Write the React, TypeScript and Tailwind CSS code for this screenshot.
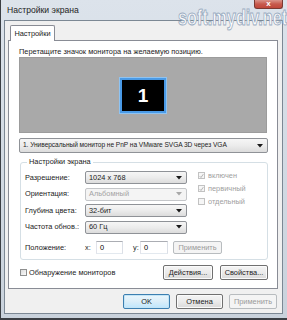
import React from "react";

const font = { fontFamily: '"Liberation Sans", Arial, sans-serif' };

function Arrow({ disabled }: { disabled?: boolean }) {
  return (
    <svg width="6" height="4" viewBox="0 0 6 4" className="shrink-0">
      <path d="M0 0 L6 0 L3 3.5 Z" fill={disabled ? "#a8a8a8" : "#1a1a1a"} />
    </svg>
  );
}

function Combo({
  text,
  disabled,
  className,
  textClass,
}: {
  text: string;
  disabled?: boolean;
  className: string;
  textClass?: string;
}) {
  return (
    <div
      className={
        "flex items-center justify-between rounded-[2px] border pl-[3px] pr-[4px] " +
        (disabled
          ? "border-[#c4c6c9] bg-[#f4f4f4] text-[#a3a3a3] "
          : "border-[#8f9297] bg-gradient-to-b from-[#f6f6f6] via-[#ececec] to-[#dcdcdc] text-[#1b1b1b] ") +
        className
      }
    >
      <span className={"whitespace-nowrap leading-none " + (textClass || "")}>{text}</span>
      <Arrow disabled={disabled} />
    </div>
  );
}

function Btn({
  text,
  disabled,
  def,
  className,
}: {
  text: string;
  disabled?: boolean;
  def?: boolean;
  className: string;
}) {
  return (
    <div
      className={
        "flex items-center justify-center rounded-[2px] border leading-none " +
        (disabled
          ? "border-[#b8bcbf] bg-[#f4f4f4] text-[#9a9a9a] "
          : def
          ? "border-[#3c7fb1] bg-gradient-to-b from-[#eaf6fd] via-[#dbeef9] to-[#bee6fd] text-[#1b1b1b] shadow-[inset_0_0_0_1px_#c4e5f6] "
          : "border-[#707070] bg-gradient-to-b from-[#f4f4f4] via-[#ebebeb] to-[#d9d9d9] text-[#1b1b1b] shadow-[inset_0_0_0_1px_#fbfbfb] ") +
        className
      }
    >
      {text}
    </div>
  );
}

function Check({
  checked,
  disabled,
  label,
}: {
  checked?: boolean;
  disabled?: boolean;
  label: string;
}) {
  return (
    <div className="flex h-[13px] items-center gap-[3px]">
      <div
        className={
          "flex h-[7px] w-[7px] items-center justify-center border " +
          (disabled ? "border-[#c2c2c2] bg-[#f6f6f6]" : "border-[#8e8f8f] bg-gradient-to-br from-[#e2e2e2] to-[#ffffff]")
        }
      >
        {checked && (
          <svg width="6" height="6" viewBox="0 0 6 6">
            <path d="M0.8 3.2 L2.4 4.8 L5.2 0.8" stroke="#a6a6a6" strokeWidth="1" fill="none" />
          </svg>
        )}
      </div>
      <span className={"leading-none " + (disabled ? "text-[#a0a0a0]" : "text-[#1b1b1b]")}>{label}</span>
    </div>
  );
}

function Row({ label, children }: { label: string; children: React.ReactNode }) {
  return (
    <div className="flex h-[13px] items-center">
      <span className="w-[60px] leading-none text-[#1b1b1b]">{label}</span>
      {children}
    </div>
  );
}

export default function App() {
  return (
    <div
      className="relative flex h-[320px] w-[287px] flex-col overflow-hidden border-b-[2px] border-l border-[#3b3f44] bg-gradient-to-b from-[#dce3eb] to-[#c9d2dc] text-[7.4px]"
      style={font}
    >
      {/* Title bar */}
      <div className="relative flex h-[20px] shrink-0 items-center pl-[6px]">
        <span className="text-[8.6px] leading-none text-[#1e1e1e]">Настройки экрана</span>
        <div className="absolute right-[4px] top-0 flex h-[9px] w-[29px] items-center justify-center rounded-b-[3px] border border-t-0 border-[#7a3a33] bg-gradient-to-b from-[#d9938a] via-[#c75a4d] to-[#c0473a]">
          <span className="text-[8px] font-bold leading-none text-white">x</span>
        </div>
      </div>

      {/* Watermark overlay */}
      <span
        className="pointer-events-none absolute left-[177px] top-[7px] z-20 origin-left scale-x-[0.74] whitespace-nowrap text-[22px] font-bold leading-none tracking-[0px] text-white opacity-95 [-webkit-text-stroke:1px_#98aabf]"
        style={{ fontFamily: '"Liberation Sans", Arial, sans-serif' }}
      >
        soft.mydiv.net
      </span>

      {/* Dialog body */}
      <div className="ml-[3px] mr-[4px] flex h-[294px] flex-col border border-[#7c8894] bg-[#f0f0f0]">
        {/* Tab */}
        <div className="relative z-10 ml-[5px] mt-[4px] -mb-px flex h-[16px] w-[45px] items-center justify-center rounded-t-[2px] border border-b-0 border-[#898c95] bg-white">
          <span className="leading-none text-[#1b1b1b]">Настройки</span>
        </div>

        {/* Panel */}
        <div className="ml-[3px] flex h-[249px] w-[270px] flex-col border border-[#898c95] bg-white">
          <div className="ml-[10px] mt-[6px] h-[10px] leading-[10px] text-[#1b1b1b]">
            Перетащите значок монитора на желаемую позицию.
          </div>

          <div className="ml-[10px] flex h-[76px] w-[248px] items-center justify-center border border-[#9c9c9c] bg-[#a9a9a9]">
            <div className="flex h-[35px] w-[46px] items-center justify-center border-[2px] border-[#4a9ae6] bg-black shadow-[0_0_0_1px_#8ec3f2]">
              <span className="text-[19px] font-bold leading-none text-white">1</span>
            </div>
          </div>

          <Combo
            text="1. Универсальный монитор не PnP на VMware SVGA 3D через VGA"
            className="ml-[10px] mt-[5px] h-[15px] w-[249px]"
            textClass="text-[6.6px] tracking-[-0.05px]"
          />

          <fieldset className="ml-[11px] mt-[4px] w-[248px] rounded-[3px] border border-[#d5dfe5] pb-[5px] pl-[4px]">
            <legend className="ml-[2px] px-[2px] leading-[10px] text-[#1b1b1b]">Настройки экрана</legend>
            <div className="mt-[4px] flex">
              <div className="flex flex-col gap-[3.5px]">
                <Row label="Разрешение:">
                  <Combo text="1024 x 768" className="h-[13px] w-[102px]" />
                </Row>
                <Row label="Ориентация:">
                  <Combo text="Альбомный" disabled className="h-[13px] w-[102px]" />
                </Row>
                <Row label="Глубина цвета:">
                  <Combo text="32-бит" className="h-[13px] w-[102px]" />
                </Row>
                <Row label="Частота обнов.:">
                  <Combo text="60 Гц" className="h-[13px] w-[102px]" />
                </Row>
              </div>
              <div className="ml-[11px] mt-[-2px] flex flex-col">
                <Check checked disabled label="включен" />
                <Check checked disabled label="первичный" />
                <Check disabled label="отдельный" />
              </div>
            </div>
            <div className="mt-[7.5px] flex h-[13px] items-center">
              <span className="w-[60px] leading-none text-[#1b1b1b]">Положение:</span>
              <span className="w-[11px] leading-none text-[#1b1b1b]">x:</span>
              <div className="flex h-[13px] w-[27px] items-center border border-[#abadb3] border-b-[#e3e9ef] border-l-[#e2e3ea] border-r-[#dbdfe6] bg-white pl-[3px] leading-none">
                0
              </div>
              <span className="ml-[10px] w-[7px] leading-none text-[#1b1b1b]">y:</span>
              <div className="flex h-[13px] w-[28px] items-center border border-[#abadb3] border-b-[#e3e9ef] border-l-[#e2e3ea] border-r-[#dbdfe6] bg-white pl-[3px] leading-none">
                0
              </div>
              <Btn text="Применить" disabled className="ml-[5px] h-[13px] w-[49px]" />
            </div>
          </fieldset>

          <div className="ml-[11px] mt-[5px] flex h-[15px] w-[248px] items-center">
            <div className="h-[7px] w-[7px] border border-[#8e8f8f] bg-gradient-to-br from-[#dcdcdc] to-[#fafafa]" />
            <span className="ml-[2px] leading-none text-[#1b1b1b]">Обнаружение мониторов</span>
            <div className="ml-auto flex gap-[7px]">
              <Btn text="Действия..." className="h-[15px] w-[50px]" />
              <Btn text="Свойства..." className="h-[15px] w-[48px]" />
            </div>
          </div>
        </div>

        {/* Bottom buttons */}
        <div className="mt-[5px] flex justify-end gap-[6px] pr-[5px]">
          <Btn text="OK" def className="h-[15px] w-[47px]" />
          <Btn text="Отмена" className="h-[15px] w-[47px]" />
          <Btn text="Применить" disabled className="h-[15px] w-[48px]" />
        </div>
      </div>
    </div>
  );
}
